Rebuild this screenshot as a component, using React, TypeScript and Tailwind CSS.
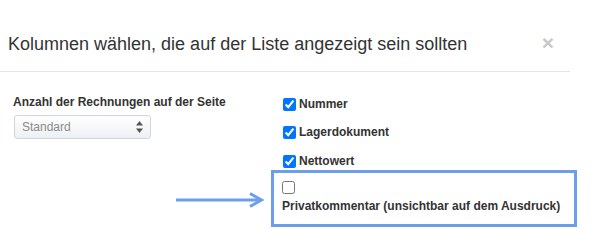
import React from "react";

function Row({ label }: { label: string }) {
  return (
    <label className="flex h-[17px] items-center gap-[3px]">
      <input type="checkbox" defaultChecked className="m-0 h-[13px] w-[13px]" />
      <span className="text-[12px] font-bold leading-[17px] text-[#333]">{label}</span>
    </label>
  );
}

export default function App() {
  return (
    <div
      className="relative h-[242px] w-[612px] overflow-hidden bg-white text-[#333]"
      style={{ fontFamily: '"Liberation Sans", Arial, sans-serif' }}
    >
      {/* Header */}
      <div className="flex h-[72px] w-[570px] items-start justify-between border-b border-[#e5e5e5] pl-2 pr-[16px] pt-[32px]">
        <h4 className="whitespace-nowrap text-[18px] font-normal leading-[24px] text-[#333]">
          Kolumnen wählen, die auf der Liste angezeigt sein sollten
        </h4>
        <span className="mt-[-1px] text-[21px] font-bold leading-[24px] text-[#c8c8c8]">×</span>
      </div>

      {/* Body */}
      <div className="flex pl-[13px] pt-[22px]">
        <div className="w-[270px]">
          <div className="text-[12px] font-bold leading-[17px] text-[#333]">
            Anzahl der Rechnungen auf der Seite
          </div>
          <div className="ml-px mt-[4px] flex h-[24px] w-[137px] items-center justify-between rounded-[3px] border border-[#cfd6df] bg-gradient-to-b from-white to-[#edf0f4] pl-[7px] pr-[7px]">
            <span className="text-[12px] leading-[17px] text-[#8a8a8a]">Standard</span>
            <svg width="7" height="12" viewBox="0 0 7 12">
              <path d="M3.5 0 L7 4.5 L0 4.5 Z" fill="#555" />
              <path d="M3.5 12 L7 7.5 L0 7.5 Z" fill="#555" />
            </svg>
          </div>
        </div>

        <div className="flex flex-col pt-[2px]">
          <div className="flex flex-col gap-[11.4px]">
            <Row label="Nummer" />
            <Row label="Lagerdokument" />
            <Row label="Nettowert" />
          </div>
          <div className="ml-[-12px] flex w-[306px] flex-col border-[3px] border-[#6d9eeb] pb-[9px] pl-[8px] pt-[8px]">
            <input type="checkbox" className="m-0 h-[13px] w-[13px]" />
            <span className="mt-[4px] text-[12px] font-bold leading-[17px] text-[#333]">
              Privatkommentar (unsichtbar auf dem Ausdruck)
            </span>
          </div>
        </div>
      </div>

      {/* Annotation arrow */}
      <svg className="absolute left-[175px] top-[192px]" width="90" height="16" viewBox="0 0 90 16">
        <line x1="1" y1="8" x2="86" y2="8" stroke="#6d9eeb" strokeWidth="3" />
        <path d="M75 1.5 L86.5 8 L75 14.5" fill="none" stroke="#6d9eeb" strokeWidth="3" />
      </svg>
    </div>
  );
}
